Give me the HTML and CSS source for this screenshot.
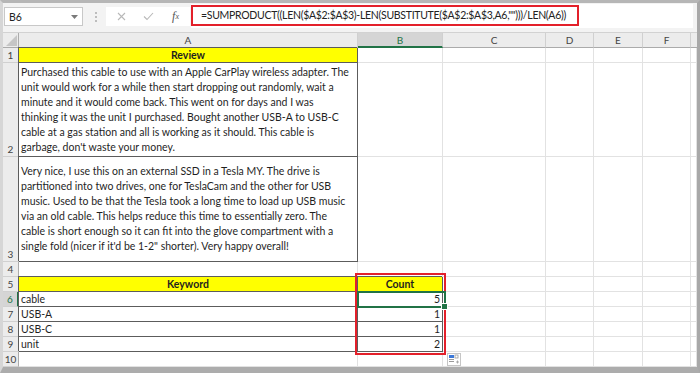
FILE: index.html
```html
<!DOCTYPE html>
<html lang="en">
<head>
  <meta charset="UTF-8">
  <meta name="viewport" content="width=device-width, initial-scale=1.0">
  <title>Keyword Count</title>
  <link rel="stylesheet" href="styles.css">
</head>
<body>

<div class="frame">

  <div class="toolbar">
    <div class="namebox">
      <span>B6</span>
      <svg width="7" height="4" viewBox="0 0 7 4"><polygon points="0,0 7,0 3.5,4" fill="#7a7a7a"/></svg>
    </div>
    <div class="grip"></div>
    <div class="fnbox">
      <span class="slot"><svg width="9" height="9" viewBox="0 0 9 9"><path d="M1 1L8 8M8 1L1 8" stroke="#b8b8b8" stroke-width="1.1"/></svg></span>
      <span class="slot"><svg width="11" height="9" viewBox="0 0 11 9"><path d="M1 4.5L4 7.5L10 1" stroke="#b8b8b8" stroke-width="1.1" fill="none"/></svg></span>
      <span class="slot fx">f<sub>x</sub></span>
    </div>
    <div class="formula">
      <div class="formula-box">=SUMPRODUCT((LEN($A$2:$A$3)-LEN(SUBSTITUTE($A$2:$A$3,A6,"")))/LEN(A6))</div>
    </div>
  </div>

  <div class="sheet">
    <!-- column headers -->
    <div class="corner"><svg width="11" height="11" viewBox="0 0 11 11"><polygon points="11,0 11,11 0,11" fill="#c6c6c6"/></svg></div>
    <div class="ch">A</div>
    <div class="ch sel">B</div>
    <div class="ch">C</div>
    <div class="ch">D</div>
    <div class="ch">E</div>
    <div class="ch">F</div>
    <div class="ch last"></div>

    <!-- row 1 -->
    <div class="rh">1</div>
    <div class="c b y ctr bold">Review</div>
    <div class="c"></div><div class="c"></div><div class="c"></div><div class="c"></div><div class="c"></div><div class="c"></div>

    <!-- row 2 -->
    <div class="rh">2</div>
    <div class="c b lines"><div>Purchased this cable to use with an Apple CarPlay wireless adapter. The<br>unit would work for a while then start dropping out randomly, wait a<br>minute and it would come back. This went on for days and I was<br>thinking it was the unit I purchased. Bought another USB-A to USB-C<br>cable at a gas station and all is working as it should. This cable is<br>garbage, don't waste your money.</div></div>
    <div class="c"></div><div class="c"></div><div class="c"></div><div class="c"></div><div class="c"></div><div class="c"></div>

    <!-- row 3 -->
    <div class="rh">3</div>
    <div class="c b lines"><div>Very nice, I use this on an external SSD in a Tesla MY. The drive is<br>partitioned into two drives, one for TeslaCam and the other for USB<br>music. Used to be that the Tesla took a long time to load up USB music<br>via an old cable. This helps reduce this time to essentially zero. The<br>cable is short enough so it can fit into the glove compartment with a<br>single fold (nicer if it'd be 1-2" shorter). Very happy overall!</div></div>
    <div class="c"></div><div class="c"></div><div class="c"></div><div class="c"></div><div class="c"></div><div class="c"></div>

    <!-- row 4 -->
    <div class="rh">4</div>
    <div class="c"></div><div class="c"></div><div class="c"></div><div class="c"></div><div class="c"></div><div class="c"></div><div class="c"></div>

    <!-- row 5 -->
    <div class="rh">5</div>
    <div class="c b y ctr bold">Keyword</div>
    <div class="c b y ctr bold">Count</div>
    <div class="c"></div><div class="c"></div><div class="c"></div><div class="c"></div><div class="c"></div>

    <!-- row 6 -->
    <div class="rh sel">6</div>
    <div class="c b">cable</div>
    <div class="c b r">5</div>
    <div class="c"></div><div class="c"></div><div class="c"></div><div class="c"></div><div class="c"></div>

    <!-- row 7 -->
    <div class="rh">7</div>
    <div class="c b">USB-A</div>
    <div class="c b r">1</div>
    <div class="c"></div><div class="c"></div><div class="c"></div><div class="c"></div><div class="c"></div>

    <!-- row 8 -->
    <div class="rh">8</div>
    <div class="c b">USB-C</div>
    <div class="c b r">1</div>
    <div class="c"></div><div class="c"></div><div class="c"></div><div class="c"></div><div class="c"></div>

    <!-- row 9 -->
    <div class="rh">9</div>
    <div class="c b">unit</div>
    <div class="c b r">2</div>
    <div class="c"></div><div class="c"></div><div class="c"></div><div class="c"></div><div class="c"></div>

    <!-- row 10 -->
    <div class="rh">10</div>
    <div class="c"></div><div class="c"></div><div class="c"></div><div class="c"></div><div class="c"></div><div class="c"></div><div class="c"></div>

    <!-- overlays -->
    <div class="count-box"></div>
    <div class="sel-box"></div>
    <div class="paste">
      <svg width="12" height="11" viewBox="0 0 12 11">
        <rect x="1" y="1" width="5" height="3" fill="#3c78d8"/>
        <rect x="1" y="5" width="5" height="1" fill="#9a9a9a"/>
        <rect x="1" y="7" width="5" height="1" fill="#9a9a9a"/>
        <rect x="7" y="1" width="3" height="3" fill="none" stroke="#9a9a9a" stroke-width="0.8"/>
        <path d="M8 8H11M9.5 6.5V9.5" stroke="#9a9a9a" stroke-width="0.8"/>
      </svg>
    </div>
  </div>

</div>

</body>
</html>
```

FILE: styles.css
```css
* { box-sizing: border-box; }
body { margin: 0; font-family: Lato, "Liberation Sans", sans-serif; }

.frame { width: 700px; height: 373px; background: #f3f3f3; border-top: 3px solid #b6b6b6; border-left: 3px solid #d6d6d6; border-right: 3px solid #a8a8a8; border-bottom: 6px solid #acacac; overflow: hidden; }

/* formula bar */
.toolbar { height: 30px; display: flex; align-items: flex-start; padding-left: 1px; border-bottom: 1px solid #d2d2d2; }
.namebox { width: 79px; height: 19px; margin-top: 4px; background: #fff; border: 1px solid #c8c8c8; display: flex; align-items: center; justify-content: space-between; padding: 0 4px 0 4px; font-size: 10.5px; color: #222; }
.grip { width: 2px; height: 10px; margin: 9px 0 0 12px; border-left: 2px dotted #bdbdbd; }
.fnbox { width: 84px; height: 19px; margin: 4px 0 0 9px; background: #fff; display: flex; align-items: center; padding-left: 2px; }
.slot { width: 27px; display: flex; justify-content: center; align-items: center; }
.fx { font-family: "Liberation Serif", serif; font-style: italic; font-size: 12px; color: #555; }
.fx sub { font-size: 8px; vertical-align: -1px; }
.formula { flex: 1; height: 24px; margin: 1px 4px 0 1px; background: #fff; padding-top: 1px; }
.formula-box { width: 388px; height: 21px; border: 2px solid #e3202a; padding-left: 8px; font-size: 10.5px; letter-spacing: -0.3px; line-height: 17px; color: #222; white-space: nowrap; overflow: hidden; }

/* grid */
.sheet { position: relative; display: grid; grid-template-columns: 16px 339px 85px 103px 48px 49px 48px 6px; grid-template-rows: 15px 15px 94px 105px repeat(7, 15px); background: #fff; }
.corner { background: #ececec; border-right: 1px solid #ababab; border-bottom: 1px solid #ababab; display: flex; align-items: flex-end; justify-content: flex-end; padding: 0 1px 1px 0; }
.ch { background: #ececec; border-right: 1px solid #d0d0d0; border-bottom: 1px solid #ababab; font-size: 10px; color: #444; text-align: center; line-height: 14px; }
.ch.sel { background: #d5d5d5; color: #217346; border-bottom: 2px solid #217346; }
.ch.last { border-right: none; }
.rh { background: #ececec; border-right: 1px solid #ababab; border-bottom: 1px solid #d0d0d0; font-size: 10px; color: #444; display: flex; align-items: flex-end; justify-content: center; line-height: 14px; }
.rh.sel { background: #d5d5d5; color: #217346; border-right: 2px solid #217346; }

.c { border-right: 1px solid #e2e2e2; border-bottom: 1px solid #e2e2e2; font-size: 10.5px; color: #1f1f1f; padding: 0 2px; display: flex; align-items: center; white-space: nowrap; overflow: hidden; line-height: 14px; }
.c.b { border-right-color: #5c5c5c; border-bottom-color: #5c5c5c; box-shadow: -1px -1px 0 #5c5c5c; }
.y { background: #ffff00; }
.ctr { justify-content: center; }
.r { justify-content: flex-end; }
.bold { font-weight: bold; }
.lines { line-height: 15px; }

/* overlays */
.count-box { position: absolute; left: 352px; top: 240px; width: 91px; height: 82px; border: 2px solid #e3202a; }
.sel-box { position: absolute; left: 354px; top: 258px; width: 89px; height: 17px; border: 2px solid #217346; }
.sel-box::after { content: ""; position: absolute; right: -4px; bottom: -4px; width: 5px; height: 5px; background: #217346; border: 1px solid #fff; }
.paste { position: absolute; left: 444px; top: 320px; width: 14px; height: 13px; background: #fff; border: 1px solid #c6c6c6; display: flex; align-items: center; justify-content: center; }
```
